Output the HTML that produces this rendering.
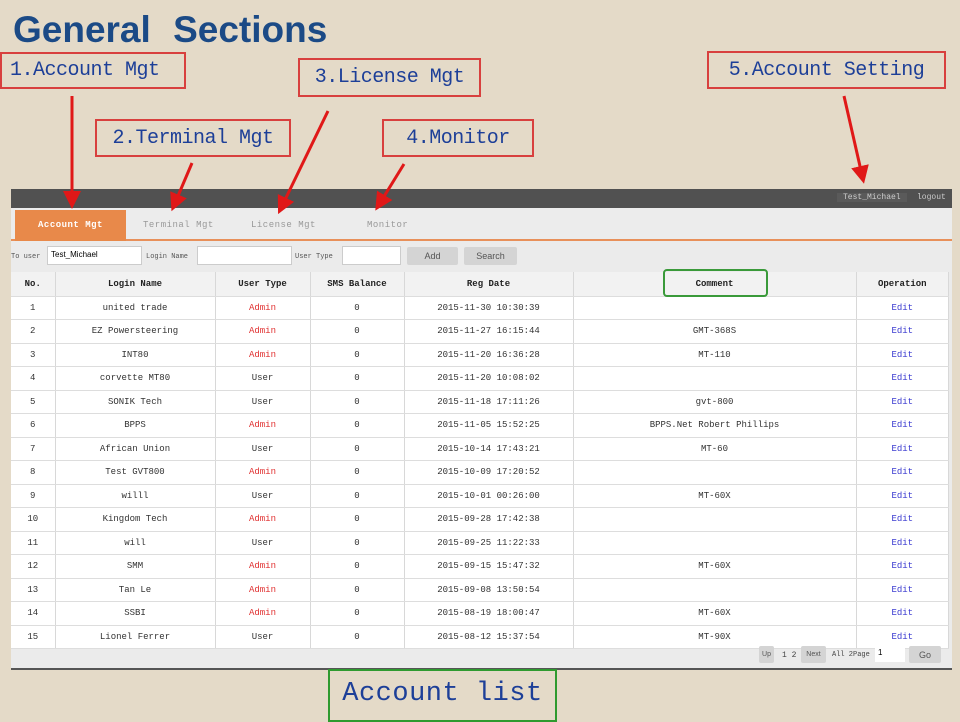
<!DOCTYPE html>
<html><head><meta charset="utf-8"><style>
*{margin:0;padding:0;box-sizing:border-box}
body{width:960px;height:720px;background:#e4dac8;position:relative;overflow:hidden;font-family:"Liberation Mono",monospace}
.title{position:absolute;left:13px;top:9px;font:bold 37px "Liberation Sans",sans-serif;color:#1b4a86;word-spacing:12px;white-space:nowrap}
.box{position:absolute;border:2px solid #d8403e;color:#1d3f98;font:20px "Liberation Mono",monospace;display:flex;align-items:center;justify-content:center;letter-spacing:-0.5px;white-space:nowrap}
.app{position:absolute;left:11px;top:189px;width:941px;height:481px;background:#ebebeb;border-bottom:2px solid #555}
.dark{height:19px;background:#515151;position:relative}
.dark span{position:absolute;top:4px;font-size:8px;color:#ccc}
.tabs{height:33px;border-bottom:2px solid #e8905a;position:relative;background:#ececec}
.tab{position:absolute;top:12px;font-size:9px;color:#999;letter-spacing:0.5px}
.on{left:4px;top:2px;width:111px;height:31px;background:#e8894a;color:#fff;font-weight:bold;text-align:center;line-height:31px}
.filt{position:absolute;top:64px;font-size:7px;color:#555}
.inp{position:absolute;top:57px;height:19px;background:#fff;border:1px solid #ccc;font:8px "Liberation Sans",sans-serif;padding:3px}
.btn{position:absolute;top:58px;height:18px;background:#d4d4d4;font:9px "Liberation Sans",sans-serif;color:#555;text-align:center;line-height:18px;border-radius:2px}
table{position:absolute;left:0;top:83px;width:938px;border-collapse:collapse;font:9px "Liberation Mono",monospace;color:#333;background:#fff}
td,th{border-right:1px solid #d8d8d8;border-bottom:1px solid #ddd;text-align:center;height:23.5px;padding:0;font-family:"Liberation Mono",monospace}
th{background:#f2f2f2;font-weight:bold;color:#222;height:24px}
.a{color:#e03030}.e{color:#3a3ad0}
.pg{position:absolute;top:458px;font-size:8px;color:#444}
</style></head><body>
<div class="title">General Sections</div>

<div class="app">
 <div class="dark"><span style="left:826px;padding:0 6px;background:#5a5a5a">Test_Michael</span><span style="left:906px">logout</span></div>
 <div class="tabs">
  <div class="tab on">Account Mgt</div>
  <div class="tab" style="left:132px">Terminal Mgt</div>
  <div class="tab" style="left:240px">License Mgt</div>
  <div class="tab" style="left:356px">Monitor</div>
 </div>
 <span class="filt" style="left:0">To user</span>
 <div class="inp" style="left:36px;width:95px">Test_Michael</div>
 <span class="filt" style="left:135px">Login Name</span>
 <div class="inp" style="left:186px;width:95px"></div>
 <span class="filt" style="left:284px">User Type</span>
 <div class="inp" style="left:331px;width:59px"></div>
 <div class="btn" style="left:396px;width:51px">Add</div>
 <div class="btn" style="left:453px;width:53px">Search</div>
 <table>
 <colgroup><col style="width:44px"><col style="width:160px"><col style="width:95px"><col style="width:94px"><col style="width:169px"><col style="width:283px"><col></colgroup>
 <tr><th>No.</th><th>Login Name</th><th>User Type</th><th>SMS Balance</th><th>Reg Date</th><th>Comment</th><th>Operation</th></tr>
 <tr><td>1</td><td>united trade</td><td class="a">Admin</td><td>0</td><td>2015-11-30 10:30:39</td><td></td><td class="e">Edit</td></tr>
 <tr><td>2</td><td>EZ Powersteering</td><td class="a">Admin</td><td>0</td><td>2015-11-27 16:15:44</td><td>GMT-368S</td><td class="e">Edit</td></tr>
 <tr><td>3</td><td>INT80</td><td class="a">Admin</td><td>0</td><td>2015-11-20 16:36:28</td><td>MT-110</td><td class="e">Edit</td></tr>
 <tr><td>4</td><td>corvette MT80</td><td>User</td><td>0</td><td>2015-11-20 10:08:02</td><td></td><td class="e">Edit</td></tr>
 <tr><td>5</td><td>SONIK Tech</td><td>User</td><td>0</td><td>2015-11-18 17:11:26</td><td>gvt-800</td><td class="e">Edit</td></tr>
 <tr><td>6</td><td>BPPS</td><td class="a">Admin</td><td>0</td><td>2015-11-05 15:52:25</td><td>BPPS.Net Robert Phillips</td><td class="e">Edit</td></tr>
 <tr><td>7</td><td>African Union</td><td>User</td><td>0</td><td>2015-10-14 17:43:21</td><td>MT-60</td><td class="e">Edit</td></tr>
 <tr><td>8</td><td>Test GVT800</td><td class="a">Admin</td><td>0</td><td>2015-10-09 17:20:52</td><td></td><td class="e">Edit</td></tr>
 <tr><td>9</td><td>willl</td><td>User</td><td>0</td><td>2015-10-01 00:26:00</td><td>MT-60X</td><td class="e">Edit</td></tr>
 <tr><td>10</td><td>Kingdom Tech</td><td class="a">Admin</td><td>0</td><td>2015-09-28 17:42:38</td><td></td><td class="e">Edit</td></tr>
 <tr><td>11</td><td>will</td><td>User</td><td>0</td><td>2015-09-25 11:22:33</td><td></td><td class="e">Edit</td></tr>
 <tr><td>12</td><td>SMM</td><td class="a">Admin</td><td>0</td><td>2015-09-15 15:47:32</td><td>MT-60X</td><td class="e">Edit</td></tr>
 <tr><td>13</td><td>Tan Le</td><td class="a">Admin</td><td>0</td><td>2015-09-08 13:50:54</td><td></td><td class="e">Edit</td></tr>
 <tr><td>14</td><td>SSBI</td><td class="a">Admin</td><td>0</td><td>2015-08-19 18:00:47</td><td>MT-60X</td><td class="e">Edit</td></tr>
 <tr><td>15</td><td>Lionel Ferrer</td><td>User</td><td>0</td><td>2015-08-12 15:37:54</td><td>MT-90X</td><td class="e">Edit</td></tr>
 </table>
 <div class="btn" style="left:748px;top:457px;width:15px;height:17px;font-size:7px">Up</div>
 <span class="pg" style="left:771px;top:462px">1 2</span>
 <div class="btn" style="left:790px;top:457px;width:25px;height:17px;font-size:7px">Next</div>
 <span class="pg" style="left:821px;top:462px;font-size:7px">All 2Page</span>
 <div class="inp" style="left:864px;top:456px;width:30px;height:17px;border:none">1</div>
 <div class="btn" style="left:898px;top:457px;width:32px;height:17px">Go</div>
</div>

<div style="position:absolute;left:663px;top:269px;width:105px;height:28px;border:2px solid #3a9a3a;border-radius:4px"></div>

<div class="box" style="left:0;top:52px;width:186px;height:37px;justify-content:flex-start;padding-left:8px">1.Account Mgt</div>
<div class="box" style="left:95px;top:119px;width:196px;height:38px">2.Terminal Mgt</div>
<div class="box" style="left:298px;top:58px;width:183px;height:39px">3.License Mgt</div>
<div class="box" style="left:382px;top:119px;width:152px;height:38px">4.Monitor</div>
<div class="box" style="left:707px;top:51px;width:239px;height:38px">5.Account Setting</div>
<div class="box" style="left:328px;top:669px;width:229px;height:53px;border-color:#2f9a2f;font-size:27px;letter-spacing:0.5px;align-items:flex-start;padding-top:8px">Account list</div>

<svg style="position:absolute;left:0;top:0" width="960" height="720">
<defs><marker id="m" markerWidth="6" markerHeight="6" refX="3" refY="3" orient="auto"><path d="M0,0 L6,3 L0,6 Z" fill="#e01818"/></marker></defs>
<g stroke="#e01818" stroke-width="3" fill="none" marker-end="url(#m)">
<line x1="72" y1="96" x2="72" y2="200"/>
<line x1="192" y1="163" x2="175" y2="203"/>
<line x1="328" y1="111" x2="282" y2="206"/>
<line x1="404" y1="164" x2="380" y2="203"/>
<line x1="844" y1="96" x2="862" y2="175"/>
</g></svg>
</body></html>
